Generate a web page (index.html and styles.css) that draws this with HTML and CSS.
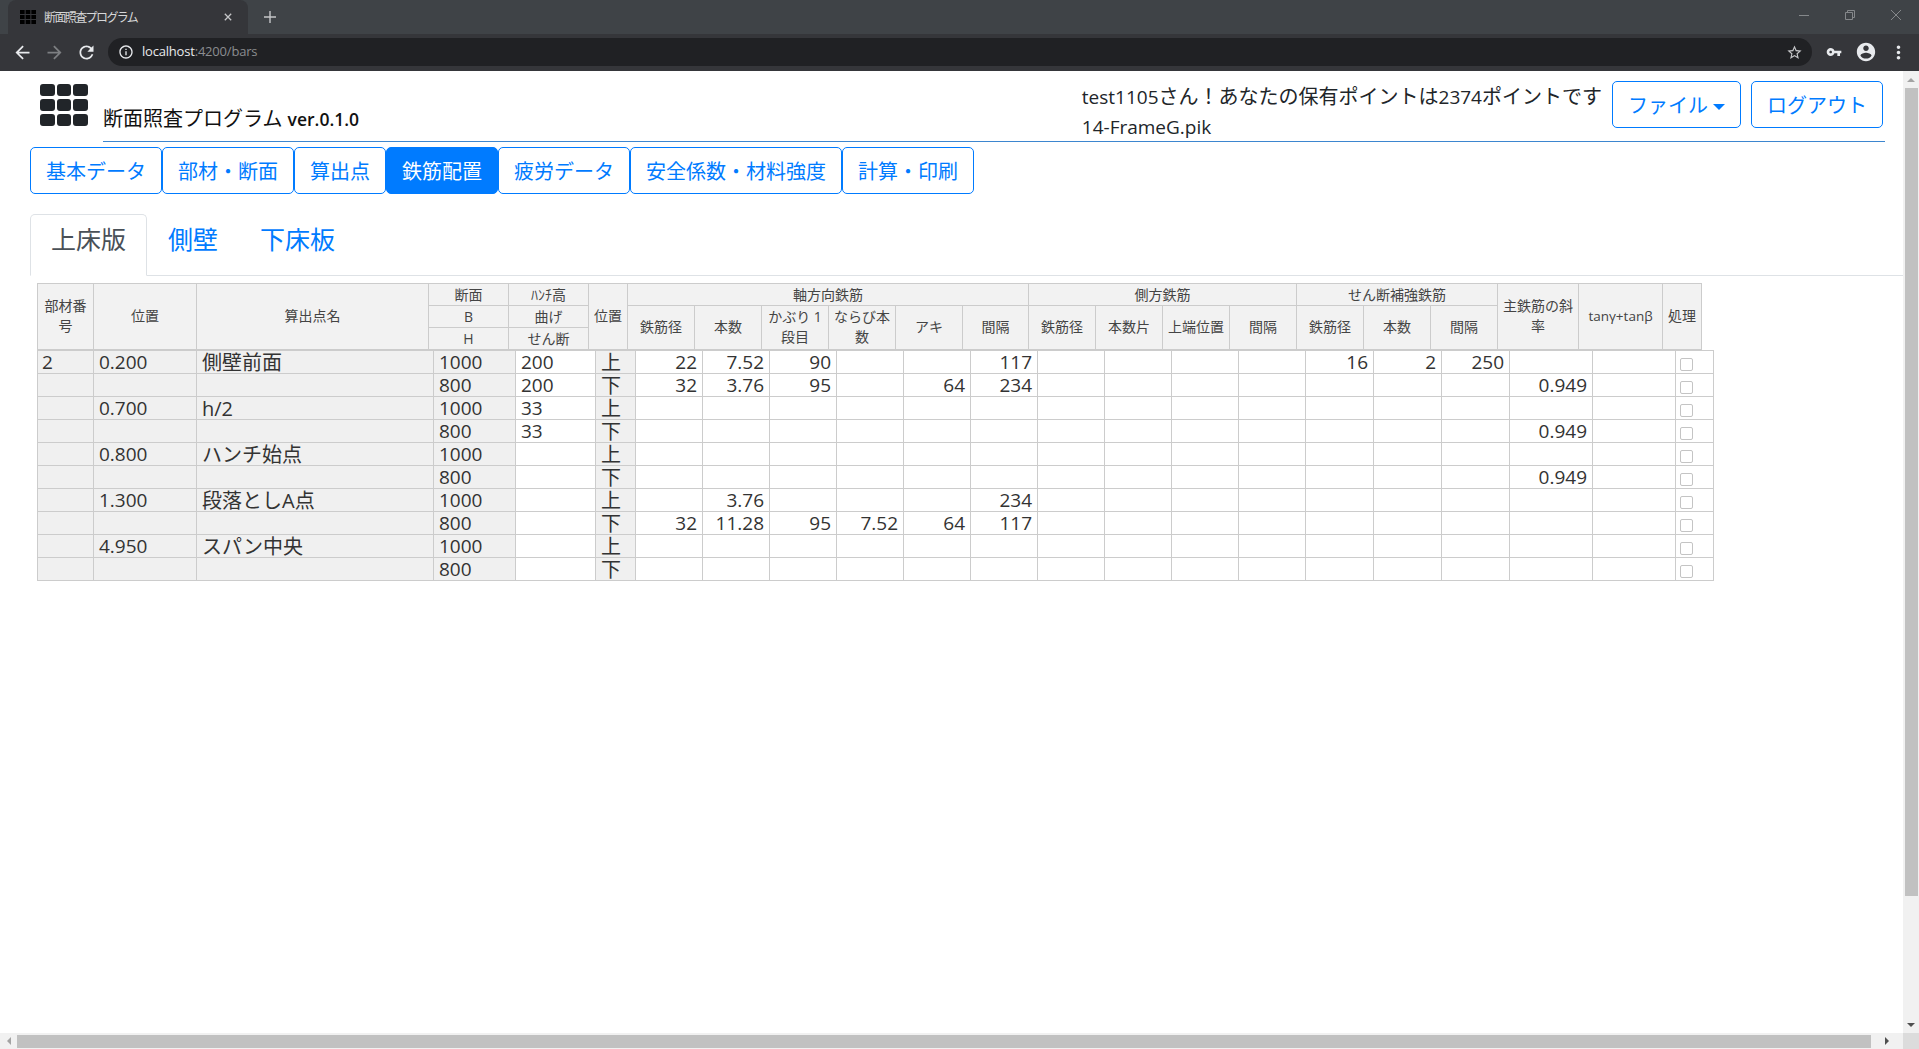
FILE: index.html
```html
<!DOCTYPE html>
<html lang="ja">
<head>
    <meta charset="UTF-8">
    <title>断面照査プログラム</title>
    <link rel="stylesheet" href="styles.css">
</head>
<body>
    <!-- browser frame -->
    <div class="tabstrip">
        <div class="browser-tab">
            <svg class="favicon" viewBox="0 0 16 14"><path d="M0 0h4.6v4H0zM5.7 0h4.6v4H5.7zM11.4 0H16v4h-4.6zM0 5h4.6v4H0zM5.7 5h4.6v4H5.7zM11.4 5H16v4h-4.6zM0 10h4.6v4H0zM5.7 10h4.6v4H5.7zM11.4 10H16v4h-4.6z"/></svg>
            <span class="browser-tab-title">断面照査プログラム</span>
            <svg class="tab-close" viewBox="0 0 10 10"><path d="M1 1l8 8M9 1l-8 8"/></svg>
        </div>
        <svg class="tab-new" viewBox="0 0 12 12"><path d="M6 0v12M0 6h12"/></svg>
        <div class="window-btns">
            <span class="window-btn"><svg viewBox="0 0 10 10"><path d="M0 5.5h10"/></svg></span>
            <span class="window-btn"><svg viewBox="0 0 10 10"><path d="M.5 2.5h7v7h-7zM2.5 2.5v-2h7v7h-2"/></svg></span>
            <span class="window-btn"><svg viewBox="0 0 10 10"><path d="M0 0l10 10M10 0L0 10"/></svg></span>
        </div>
    </div>
    <div class="toolbar">
        <span class="tool-btn"><svg viewBox="0 0 24 24"><path d="M20 11H7.83l5.59-5.59L12 4l-8 8 8 8 1.41-1.41L7.83 13H20v-2z"/></svg></span>
        <span class="tool-btn tool-off"><svg viewBox="0 0 24 24"><path d="M4 11h12.17l-5.59-5.59L12 4l8 8-8 8-1.41-1.41L16.17 13H4v-2z"/></svg></span>
        <span class="tool-btn"><svg viewBox="0 0 24 24"><path d="M17.65 6.35C16.2 4.9 14.21 4 12 4c-4.42 0-7.99 3.58-7.99 8s3.57 8 7.99 8c3.73 0 6.84-2.55 7.73-6h-2.08c-.82 2.33-3.04 4-5.65 4-3.31 0-6-2.69-6-6s2.69-6 6-6c1.66 0 3.14.69 4.22 1.78L13 11h7V4l-2.35 2.35z"/></svg></span>
        <div class="omnibox">
            <svg class="omni-icon" viewBox="0 0 24 24"><path d="M11 7h2v2h-2zm0 4h2v6h-2zm1-9C6.48 2 2 6.48 2 12s4.48 10 10 10 10-4.48 10-10S17.52 2 12 2zm0 18c-4.41 0-8-3.59-8-8s3.59-8 8-8 8 3.59 8 8-3.59 8-8 8z"/></svg>
            <span class="url">localhost<span class="url-rest">:4200/bars</span></span>
            <svg class="omni-icon star" viewBox="0 0 24 24"><path d="M22 9.24l-7.19-.62L12 2 9.19 8.63 2 9.24l5.46 4.73L5.82 21 12 17.27 18.18 21l-1.63-7.03L22 9.24zM12 15.4l-3.76 2.27 1-4.28-3.32-2.88 4.38-.38L12 6.1l1.71 4.04 4.38.38-3.32 2.88 1 4.28L12 15.4z"/></svg>
        </div>
        <span class="tool-btn"><svg class="key" viewBox="0 0 24 24"><path d="M12.65 10C11.83 7.67 9.61 6 7 6c-3.31 0-6 2.69-6 6s2.69 6 6 6c2.61 0 4.83-1.67 5.65-4H17v4h4v-4h2v-4H12.65zM7 14c-1.1 0-2-.9-2-2s.9-2 2-2 2 .9 2 2-.9 2-2 2z"/></svg></span>
        <span class="tool-btn"><svg class="avatar" viewBox="0 0 24 24"><path d="M12 2C6.48 2 2 6.48 2 12s4.48 10 10 10 10-4.48 10-10S17.52 2 12 2zm0 3c1.66 0 3 1.34 3 3s-1.34 3-3 3-3-1.34-3-3 1.34-3 3-3zm0 14.2c-2.5 0-4.71-1.28-6-3.22.03-1.99 4-3.08 6-3.08 1.99 0 5.97 1.09 6 3.08-1.29 1.94-3.5 3.22-6 3.22z"/></svg></span>
        <span class="tool-btn"><svg viewBox="0 0 24 24"><path d="M12 8c1.1 0 2-.9 2-2s-.9-2-2-2-2 .9-2 2 .9 2 2 2zm0 2c-1.1 0-2 .9-2 2s.9 2 2 2 2-.9 2-2-.9-2-2-2zm0 6c-1.1 0-2 .9-2 2s.9 2 2 2 2-.9 2-2-.9-2-2-2z"/></svg></span>
    </div>

    <div class="viewport">
        <div class="page">
            <header class="app-header">
                <svg class="logo" viewBox="0 0 48 42"><path d="M3 0h9a3 3 0 0 1 3 3v6a3 3 0 0 1-3 3H3a3 3 0 0 1-3-3V3a3 3 0 0 1 3-3zM20 0h8a3 3 0 0 1 3 3v6a3 3 0 0 1-3 3h-8a3 3 0 0 1-3-3V3a3 3 0 0 1 3-3zM36 0h9a3 3 0 0 1 3 3v6a3 3 0 0 1-3 3h-9a3 3 0 0 1-3-3V3a3 3 0 0 1 3-3zM3 15h9a3 3 0 0 1 3 3v6a3 3 0 0 1-3 3H3a3 3 0 0 1-3-3v-6a3 3 0 0 1 3-3zM20 15h8a3 3 0 0 1 3 3v6a3 3 0 0 1-3 3h-8a3 3 0 0 1-3-3v-6a3 3 0 0 1 3-3zM36 15h9a3 3 0 0 1 3 3v6a3 3 0 0 1-3 3h-9a3 3 0 0 1-3-3v-6a3 3 0 0 1 3-3zM3 30h9a3 3 0 0 1 3 3v6a3 3 0 0 1-3 3H3a3 3 0 0 1-3-3v-6a3 3 0 0 1 3-3zM20 30h8a3 3 0 0 1 3 3v6a3 3 0 0 1-3 3h-8a3 3 0 0 1-3-3v-6a3 3 0 0 1 3-3zM36 30h9a3 3 0 0 1 3 3v6a3 3 0 0 1-3 3h-9a3 3 0 0 1-3-3v-6a3 3 0 0 1 3-3z"/></svg>
                <div class="header-main">
                    <div class="app-title">断面照査プログラム <span class="app-ver">ver.0.1.0</span></div>
                    <div class="user-info">
                        <div><span class="lat">test1105</span>さん！あなたの保有ポイントは<span class="lat">2374</span>ポイントです</div>
                        <div><span class="lat">14-FrameG.pik</span></div>
                    </div>
                    <div class="header-btns">
                        <button class="btn btn-file">ファイル<span class="caret"></span></button>
                        <button class="btn">ログアウト</button>
                    </div>
                </div>
            </header>

            <nav class="menu">
                <button class="btn menu-btn">基本データ</button>
                <button class="btn menu-btn">部材・断面</button>
                <button class="btn menu-btn">算出点</button>
                <button class="btn menu-btn active">鉄筋配置</button>
                <button class="btn menu-btn">疲労データ</button>
                <button class="btn menu-btn">安全係数・材料強度</button>
                <button class="btn menu-btn">計算・印刷</button>
            </nav>

            <ul class="nav-tabs">
                <li class="nav-tab active">上床版</li>
                <li class="nav-tab">側壁</li>
                <li class="nav-tab">下床板</li>
            </ul>

            <table class="grid-head">
                <colgroup>
                    <col class="h-no"><col class="h-pos"><col class="h-name"><col class="h-sec"><col class="h-sec"><col class="h-ud">
                    <col class="h-bar" span="5"><col class="h-bar-end"><col class="h-bar" span="7">
                    <col class="h-rate"><col class="h-tan"><col class="h-ud">
                </colgroup>
                <thead>
                    <tr>
                        <th rowspan="3">部材番号</th>
                        <th rowspan="3">位置</th>
                        <th rowspan="3">算出点名</th>
                        <th>断面</th>
                        <th>ﾊﾝﾁ高</th>
                        <th rowspan="3">位置</th>
                        <th colspan="6">軸方向鉄筋</th>
                        <th colspan="4">側方鉄筋</th>
                        <th colspan="3">せん断補強鉄筋</th>
                        <th rowspan="3">主鉄筋の斜率</th>
                        <th rowspan="3" class="th-latin">tanγ+tanβ</th>
                        <th rowspan="3">処理</th>
                    </tr>
                    <tr>
                        <th>B</th>
                        <th>曲げ</th>
                        <th rowspan="2">鉄筋径</th>
                        <th rowspan="2">本数</th>
                        <th rowspan="2">かぶり 1 段目</th>
                        <th rowspan="2">ならび本数</th>
                        <th rowspan="2">アキ</th>
                        <th rowspan="2">間隔</th>
                        <th rowspan="2">鉄筋径</th>
                        <th rowspan="2">本数片</th>
                        <th rowspan="2">上端位置</th>
                        <th rowspan="2">間隔</th>
                        <th rowspan="2">鉄筋径</th>
                        <th rowspan="2">本数</th>
                        <th rowspan="2">間隔</th>
                    </tr>
                    <tr>
                        <th>H</th>
                        <th>せん断</th>
                    </tr>
                </thead>
            </table>

            <table class="grid-body">
                <colgroup>
                    <col class="b-no"><col class="b-pos"><col class="b-name"><col class="b-sec"><col class="b-hun"><col class="b-ud">
                    <col class="b-bar" span="10"><col class="b-shear" span="3">
                    <col class="b-rate" span="2"><col class="b-chk">
                </colgroup>
                <tbody>
                    <tr><td class="ro first">2</td><td class="ro">0.200</td><td class="ro cjk">側壁前面</td><td class="ro">1000</td><td>200</td><td class="ro cjk">上</td><td class="n">22</td><td class="n">7.52</td><td class="n">90</td><td></td><td></td><td class="n">117</td><td></td><td></td><td></td><td></td><td class="n">16</td><td class="n">2</td><td class="n">250</td><td></td><td></td><td class="chk"><input type="checkbox"></td></tr>
                    <tr><td class="ro"></td><td class="ro"></td><td class="ro cjk"></td><td class="ro">800</td><td>200</td><td class="ro cjk">下</td><td class="n">32</td><td class="n">3.76</td><td class="n">95</td><td></td><td class="n">64</td><td class="n">234</td><td></td><td></td><td></td><td></td><td></td><td></td><td></td><td class="n">0.949</td><td></td><td class="chk"><input type="checkbox"></td></tr>
                    <tr><td class="ro"></td><td class="ro">0.700</td><td class="ro cjk">h/2</td><td class="ro">1000</td><td>33</td><td class="ro cjk">上</td><td></td><td></td><td></td><td></td><td></td><td></td><td></td><td></td><td></td><td></td><td></td><td></td><td></td><td></td><td></td><td class="chk"><input type="checkbox"></td></tr>
                    <tr><td class="ro"></td><td class="ro"></td><td class="ro cjk"></td><td class="ro">800</td><td>33</td><td class="ro cjk">下</td><td></td><td></td><td></td><td></td><td></td><td></td><td></td><td></td><td></td><td></td><td></td><td></td><td></td><td class="n">0.949</td><td></td><td class="chk"><input type="checkbox"></td></tr>
                    <tr><td class="ro"></td><td class="ro">0.800</td><td class="ro cjk">ハンチ始点</td><td class="ro">1000</td><td></td><td class="ro cjk">上</td><td></td><td></td><td></td><td></td><td></td><td></td><td></td><td></td><td></td><td></td><td></td><td></td><td></td><td></td><td></td><td class="chk"><input type="checkbox"></td></tr>
                    <tr><td class="ro"></td><td class="ro"></td><td class="ro cjk"></td><td class="ro">800</td><td></td><td class="ro cjk">下</td><td></td><td></td><td></td><td></td><td></td><td></td><td></td><td></td><td></td><td></td><td></td><td></td><td></td><td class="n">0.949</td><td></td><td class="chk"><input type="checkbox"></td></tr>
                    <tr><td class="ro"></td><td class="ro">1.300</td><td class="ro cjk">段落としA点</td><td class="ro">1000</td><td></td><td class="ro cjk">上</td><td></td><td class="n">3.76</td><td></td><td></td><td></td><td class="n">234</td><td></td><td></td><td></td><td></td><td></td><td></td><td></td><td></td><td></td><td class="chk"><input type="checkbox"></td></tr>
                    <tr><td class="ro"></td><td class="ro"></td><td class="ro cjk"></td><td class="ro">800</td><td></td><td class="ro cjk">下</td><td class="n">32</td><td class="n">11.28</td><td class="n">95</td><td class="n">7.52</td><td class="n">64</td><td class="n">117</td><td></td><td></td><td></td><td></td><td></td><td></td><td></td><td></td><td></td><td class="chk"><input type="checkbox"></td></tr>
                    <tr><td class="ro"></td><td class="ro">4.950</td><td class="ro cjk">スパン中央</td><td class="ro">1000</td><td></td><td class="ro cjk">上</td><td></td><td></td><td></td><td></td><td></td><td></td><td></td><td></td><td></td><td></td><td></td><td></td><td></td><td></td><td></td><td class="chk"><input type="checkbox"></td></tr>
                    <tr><td class="ro"></td><td class="ro"></td><td class="ro cjk"></td><td class="ro">800</td><td></td><td class="ro cjk">下</td><td></td><td></td><td></td><td></td><td></td><td></td><td></td><td></td><td></td><td></td><td></td><td></td><td></td><td></td><td></td><td class="chk"><input type="checkbox"></td></tr>
                </tbody>
            </table>
        </div>
        <div class="vbar">
            <span class="bar-arrow arrow-up"></span>
            <div class="vbar-thumb"></div>
            <span class="bar-arrow arrow-down"></span>
        </div>
    </div>
    <div class="hbar">
        <span class="bar-arrow arrow-left"></span>
        <div class="hbar-thumb"></div>
        <span class="bar-arrow arrow-right"></span>
        <div class="bar-corner"></div>
    </div>
</body>
</html>
```

FILE: styles.css
```css
* {
    box-sizing: border-box;
}
body {
    display: flex;
    flex-direction: column;
    height: 100vh;
    margin: 0;
    overflow: hidden;
    background: white;
    color: #212529;
    font-family: "Open Sans", "Noto Sans CJK JP", sans-serif;
}

/* browser frame */
.tabstrip {
    display: flex;
    align-items: flex-end;
    height: 34px;
    padding-left: 8px;
    background: #3f4347;
}
.browser-tab {
    display: flex;
    align-items: center;
    width: 240px;
    height: 34px;
    padding: 0 12px;
    background: #35363a;
    border-radius: 8px 8px 0 0;
}
.favicon {
    width: 16px;
    height: 14px;
    fill: #000;
}
.browser-tab-title {
    flex: 1;
    margin-left: 8px;
    color: #d6d7d8;
    font-size: 12px;
    letter-spacing: -1.6px;
}
.tab-close {
    width: 8px;
    height: 8px;
    margin-right: 4px;
    fill: none;
    stroke: #c5c6c8;
    stroke-width: 1.6;
}
.tab-new {
    align-self: center;
    width: 12px;
    height: 12px;
    margin-left: 16px;
    fill: none;
    stroke: #c5c6c8;
    stroke-width: 1.4;
}
.window-btns {
    display: flex;
    align-self: flex-start;
    margin-left: auto;
}
.window-btn {
    display: flex;
    align-items: center;
    justify-content: center;
    width: 46px;
    height: 29px;
}
.window-btn svg {
    width: 10px;
    height: 10px;
    fill: none;
    stroke: #85888b;
    stroke-width: 1;
}
.toolbar {
    display: flex;
    align-items: center;
    height: 37px;
    padding: 0 5px 1px 6px;
    background: #35363a;
}
.tool-btn {
    display: flex;
    align-items: center;
    justify-content: center;
    width: 32px;
    height: 28px;
}
.tool-btn svg {
    width: 21px;
    height: 21px;
    fill: #e8eaed;
}
.tool-btn .key {
    width: 16px;
    height: 16px;
}
.tool-btn .avatar {
    width: 22px;
    height: 22px;
}
.tool-off svg {
    fill: #7d7f82;
}
.omnibox {
    display: flex;
    flex: 1;
    align-items: center;
    height: 28px;
    margin: 0 6px;
    padding: 0 8px;
    background: #202124;
    border-radius: 14px;
}
.omni-icon {
    width: 16px;
    height: 16px;
    margin: 0 2px;
    fill: #e8eaed;
}
.star {
    width: 17px;
    height: 17px;
    margin: 0 1.5px;
    fill: #c5c6c8;
}
.url {
    flex: 1;
    margin-left: 6px;
    padding-bottom: 2px;
    color: #e8eaed;
    font-family: "Open Sans", sans-serif;
    font-size: 13px;
    letter-spacing: -.2px;
}
.url-rest {
    color: #8b8d90;
}

/* page */
.viewport {
    display: flex;
    flex: 1;
    min-height: 0;
}
.page {
    flex: 1;
    min-width: 0;
}
.app-header {
    display: flex;
    height: 71px;
    padding: 0 18px 0 40px;
}
.logo {
    width: 48px;
    height: 42px;
    margin-top: 13px;
    fill: #212529;
}
.header-main {
    display: flex;
    flex: 1;
    margin-left: 15px;
    padding-right: 2px;
    border-bottom: 1px solid #3d86cf;
}
.app-title {
    align-self: flex-end;
    margin-bottom: 7px;
    font-size: 20px;
    line-height: 30px;
    color: #111;
}
.app-ver {
    font-size: 17.5px;
    font-weight: 600;
}
.user-info {
    margin-left: auto;
    padding-top: 11px;
    font-size: 20px;
    line-height: 30px;
    white-space: nowrap;
}
.lat {
    font-size: 19px;
}
.header-btns {
    display: flex;
    gap: 10px;
    margin: 10px 0 0 10px;
}
.btn {
    height: 47px;
    padding: 0 15px;
    background: white;
    border: 1px solid #007bff;
    border-radius: 5px;
    color: #007bff;
    font-family: inherit;
    font-size: 20px;
    white-space: nowrap;
}
.caret {
    display: inline-block;
    margin-left: 5px;
    vertical-align: 3px;
    border-top: 6px solid #007bff;
    border-right: 6px solid transparent;
    border-left: 6px solid transparent;
}
.menu {
    display: flex;
    margin: 5px 0 0 30px;
}
.menu-btn.active {
    background: #007bff;
    color: white;
}

/* sub tabs */
.nav-tabs {
    display: flex;
    margin: 20px 0 0 30px;
    padding: 0;
    list-style: none;
    border-bottom: 1px solid #dee2e6;
}
.nav-tab {
    height: 62px;
    margin-bottom: -1px;
    padding: 6px 20px 18px;
    border: 1px solid transparent;
    border-radius: 5px 5px 0 0;
    color: #007bff;
    font-size: 25px;
    line-height: 36px;
}
.nav-tab.active {
    background: white;
    border-color: #dee2e6 #dee2e6 white;
    color: #495057;
}

/* grid */
table {
    border-collapse: collapse;
    table-layout: fixed;
    margin-left: 37px;
}
.grid-head {
    width: 1664px;
    margin-top: 7px;
}
.grid-head th {
    height: 22px;
    padding: 0 2px;
    background: #f2f2f2;
    border: 1px solid #ccc;
    color: #444;
    font-size: 14px;
    font-weight: 400;
    line-height: 21px;
    text-align: center;
}
.grid-head th[rowspan] {
    padding-bottom: 2px;
    line-height: 20px;
}
.grid-head thead {
    border-bottom: 2px solid #ccc;
}
.grid-head .th-latin {
    font-size: 13.5px;
}
.h-no { width: 56px; }
.h-pos { width: 103px; }
.h-name { width: 232px; }
.h-sec { width: 80px; }
.h-ud { width: 39px; }
.h-bar { width: 67px; }
.h-bar-end { width: 66px; }
.h-rate { width: 81px; }
.h-tan { width: 84px; }

.grid-body {
    width: 1676px;
    margin-top: -1px;
}
.grid-body td {
    height: 23px;
    padding: 0 5px;
    border: 1px solid #ccc;
    color: #333;
    font-size: 19px;
    line-height: 21px;
    white-space: nowrap;
}
.grid-body .first {
    padding-left: 4px;
}
.grid-body .ro {
    background: #f0f0f0;
}
.grid-body .cjk {
    font-size: 20px;
}
.grid-body .n {
    text-align: right;
}
.grid-body .chk {
    padding: 0 4px;
    line-height: 0;
}
.chk input {
    appearance: none;
    width: 13px;
    height: 13px;
    margin: 5px 0 0;
    background: white;
    border: 1px solid #c4c4c4;
    border-radius: 2px;
}
.b-no { width: 56px; }
.b-pos { width: 103px; }
.b-name { width: 237px; }
.b-sec { width: 82px; }
.b-hun { width: 80px; }
.b-ud { width: 40px; }
.b-bar { width: 67px; }
.b-shear { width: 68px; }
.b-rate { width: 83px; }
.b-chk { width: 38px; }

/* scrollbars */
.vbar {
    display: flex;
    flex-direction: column;
    width: 16px;
    background: #f1f1f1;
}
.vbar-thumb {
    width: 13px;
    height: 808px;
    margin-left: 2px;
    background: #c1c1c1;
}
.hbar {
    display: flex;
    align-items: center;
    height: 16px;
    background: #f1f1f1;
}
.hbar-thumb {
    width: 1854px;
    height: 13px;
    margin-top: 1px;
    background: #c1c1c1;
}
.bar-corner {
    width: 16px;
    height: 16px;
    background: #dcdcdc;
}
.bar-arrow {
    display: flex;
    align-items: center;
    justify-content: center;
    flex: none;
    width: 16px;
    height: 17px;
}
.bar-arrow::before {
    content: "";
    border: 4px solid transparent;
}
.arrow-up::before {
    margin-bottom: 4px;
    border-bottom-color: #a3a3a3;
}
.arrow-down {
    margin-top: auto;
}
.arrow-down::before {
    margin-top: 4px;
    border-top-color: #505050;
}
.arrow-left {
    width: 17px;
}
.arrow-left::before {
    margin-right: 4px;
    border-right-color: #a3a3a3;
}
.arrow-right {
    width: 32px;
}
.arrow-right::before {
    margin-left: 4px;
    border-left-color: #505050;
}
```
